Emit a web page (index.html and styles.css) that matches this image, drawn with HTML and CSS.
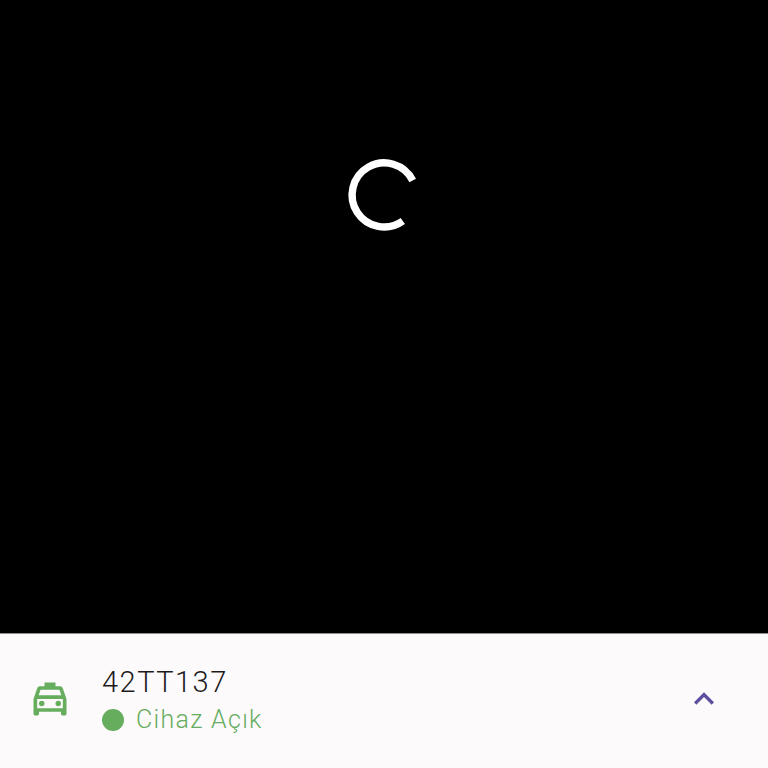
FILE: index.html
```html
<!DOCTYPE html>
<html lang="tr">
<head>
<meta charset="utf-8" />
<title>Cihaz</title>
<link rel="stylesheet" href="styles.css">
</head>
<body>
<div class="screen">
  <div class="video">
    <svg class="spinner" width="80" height="80" viewBox="0 0 80 80">
      <path d="M68.7 25.5A32 32 0 1 0 58.8 65.9" fill="none" stroke="#fff" stroke-width="7.4" />
    </svg>
  </div>
  <div class="panel">
    <svg class="taxi" width="44" height="44" viewBox="0 0 24 24" fill="#66ad5e">
      <path d="M18.92 6.01C18.72 5.42 18.16 5 17.5 5H15V3H9v2H6.5c-.66 0-1.21.42-1.42 1.01L3 12v8c0 .55.45 1 1 1h1c.55 0 1-.45 1-1v-1h12v1c0 .55.45 1 1 1h1c.55 0 1-.45 1-1v-8l-2.08-5.99zM6.85 7h10.29l1.04 3H5.81l1.04-3zM19 17H5v-5h14v5z" />
      <circle cx="7.5" cy="14.5" r="1.5" />
      <circle cx="16.5" cy="14.5" r="1.5" />
    </svg>
    <div class="info">
      <div class="plate">42TT137</div>
      <div class="status"><span class="dot"></span>Cihaz Açık</div>
    </div>
    <svg class="chevron" width="40" height="40" viewBox="0 0 24 24" fill="#5e4f9f">
      <path d="M12 8l-6 6 1.41 1.41L12 10.83l4.59 4.58L18 14z" />
    </svg>
  </div>
</div>
</body>
</html>
```

FILE: styles.css
```css
*{ padding:0; margin:0; box-sizing:border-box; }
html, body{ width:100%; height:100%; background:#000; }
.screen{
  width:768px;
  height:768px;
  display:flex;
  flex-direction:column;
  font-family:Roboto, "Liberation Sans", sans-serif;
}
.video{
  flex:1;
  background:#000;
  display:flex;
  justify-content:center;
  align-items:flex-start;
  padding-top:155px;
}
.spinner{ display:block; margin-left:-1px; }
.panel{
  height:135px;
  background:#fdfafc;
  border-top:1px solid #8e8c90;
  display:flex;
  align-items:center;
  padding:0 44px 0 28px;
}
.taxi{ flex:none; margin-top:-5px; }
.info{ flex:1; margin-left:30px; }
.plate{
  font-size:29px;
  font-weight:300;
  line-height:36px;
  letter-spacing:1.5px;
  color:#1d1b20;
}
.status{
  display:flex;
  align-items:center;
  font-size:25px;
  font-weight:300;
  line-height:36px;
  letter-spacing:1.3px;
  color:#66ad5e;
  margin-top:2px;
}
.dot{
  width:22px;
  height:22px;
  border-radius:50%;
  background:#66ad5e;
  margin-right:12px;
}
.chevron{ flex:none; margin-top:-5px; }
```
